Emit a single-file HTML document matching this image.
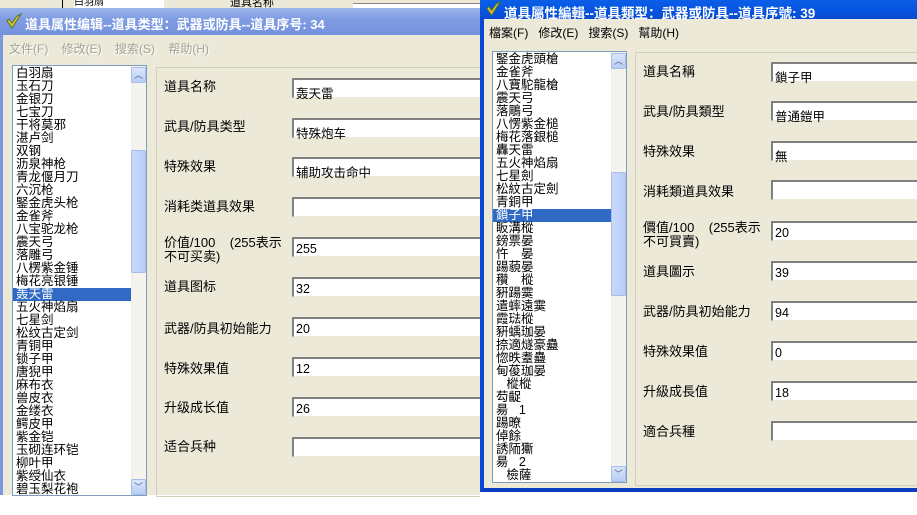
<!DOCTYPE html>
<html><head><meta charset="utf-8"><style>
*{margin:0;padding:0;box-sizing:border-box}
body{width:917px;height:515px;background:#fff;position:relative;overflow:hidden;font-family:"Liberation Sans","Noto Sans CJK SC",sans-serif;font-size:12px;color:#000}
.a{position:absolute}
.win{background:#ece9d8}
.list{background:#fff;border:1px solid #7f9db9;overflow:hidden;line-height:13px;font-size:12.5px;padding-left:3px}
.list div{white-space:nowrap;height:13px}
.sel{background:#316ac5;color:#fff;margin-left:-3px;padding-left:3px}
.sb{background:#f4f3ee;border-left:1px solid #eee}
.btn{background:linear-gradient(#dbe6fb,#b7cdf5);border:1px solid #a6bde9;border-radius:2px;color:#4d6185;font-size:9px;text-align:center;line-height:14px}
.thumb{background:linear-gradient(90deg,#c9d8fb,#b8cdf8);border:1px solid #a6bde9;border-radius:2px}
.gb{border:1px solid #d0d0bf;border-right:none}
.lb{font-size:13px;white-space:nowrap}
.in{background:#fff;border-top:2px solid #808080;border-left:2px solid #808080;border-bottom:1px solid #ece9d8;height:20px;font-size:12.5px;padding:3px 0 0 2px;white-space:nowrap}
.tt{color:#fff;font-weight:bold;font-size:13px;white-space:nowrap}
.menu{font-size:12px;white-space:nowrap}
</style></head><body>
<!-- background window behind -->
<div class="a win" style="left:0;top:0;width:480px;height:10px"></div>
<div class="a" style="left:62px;top:0;width:14px;height:9px;border-left:1px solid #000;border-right:1px solid #000"></div>
<div class="a" style="left:74px;top:0;width:90px;height:8px;background:#fff;font-size:10px;line-height:6px;overflow:hidden">白羽扇</div>
<div class="a" style="left:230px;top:0;font-size:11px;line-height:6px;height:8px;overflow:hidden">道具名称</div>
<div class="a" style="left:353px;top:3px;width:127px;height:6px;border-top:1px solid #888;background:#fff"></div>

<!-- left window -->
<div class="a win" style="left:0;top:8px;width:480px;height:487px;border-left:3px solid #7b96dc"></div>
<div class="a" style="left:0;top:8px;width:480px;height:27px;background:linear-gradient(#9db6ec,#7f9ce3 40%,#7592dd)"></div>
<svg class="a" style="left:5px;top:12px" width="18" height="18" viewBox="0 0 18 18"><path d="M2 9 L7 16 L16 2 L12 4 L7 11 L4 7 Z" fill="#d8c838" stroke="#5a7020" stroke-width="1"/></svg>
<div class="a tt" style="left:25px;top:14px">道具属性编辑--道具类型：武器或防具--道具序号: 34</div>
<div class="a menu" style="left:9px;top:40px;color:#a4a296;text-shadow:1px 1px 0 #fff">文件(F)&nbsp;&nbsp;&nbsp;&nbsp;修改(E)&nbsp;&nbsp;&nbsp;&nbsp;搜索(S)&nbsp;&nbsp;&nbsp;&nbsp;帮助(H)</div>
<div class="a list" style="left:12px;top:65px;width:135px;height:431px;padding-top:1px">
<div>白羽扇</div><div>玉石刀</div><div>金银刀</div><div>七宝刀</div><div>干将莫邪</div><div>湛卢剑</div><div>双钢</div><div>沥泉神枪</div><div>青龙偃月刀</div><div>六沉枪</div><div>鋻金虎头枪</div><div>金雀斧</div><div>八宝驼龙枪</div><div>震天弓</div><div>落雕弓</div><div>八楞紫金锤</div><div>梅花亮银锤</div><div class="sel">轰天雷</div><div>五火神焰扇</div><div>七星剑</div><div>松纹古定剑</div><div>青铜甲</div><div>锁子甲</div><div>唐猊甲</div><div>麻布衣</div><div>兽皮衣</div><div>金缕衣</div><div>鳄皮甲</div><div>紫金铠</div><div>玉砌连环铠</div><div>柳叶甲</div><div>紫绶仙衣</div><div>碧玉梨花袍</div>
</div>
<div class="a sb" style="left:131px;top:66px;width:15px;height:429px"></div>
<div class="a btn" style="left:131px;top:67px;width:15px;height:16px">︿</div>
<div class="a thumb" style="left:131px;top:150px;width:15px;height:123px"></div>
<div class="a btn" style="left:131px;top:479px;width:15px;height:16px">﹀</div>
<div class="a gb" style="left:156px;top:67px;width:324px;height:430px"></div>
<div class="a lb" style="left:164px;top:76px">道具名称</div>
<div class="a in" style="left:292px;top:78px;width:188px">轰天雷</div>
<div class="a lb" style="left:164px;top:116px">武具/防具类型</div>
<div class="a in" style="left:292px;top:118px;width:188px">特殊炮车</div>
<div class="a lb" style="left:164px;top:156px">特殊效果</div>
<div class="a in" style="left:292px;top:157px;width:188px">辅助攻击命中</div>
<div class="a lb" style="left:164px;top:196px">消耗类道具效果</div>
<div class="a in" style="left:292px;top:197px;width:188px"></div>
<div class="a lb" style="left:164px;top:236px;line-height:14px">价值/100&nbsp;&nbsp;&nbsp;&nbsp;(255表示<br>不可买卖)</div>
<div class="a in" style="left:292px;top:237px;width:188px">255</div>
<div class="a lb" style="left:164px;top:276px">道具图标</div>
<div class="a in" style="left:292px;top:277px;width:188px">32</div>
<div class="a lb" style="left:164px;top:318px">武器/防具初始能力</div>
<div class="a in" style="left:292px;top:317px;width:188px">20</div>
<div class="a lb" style="left:164px;top:358px">特殊效果值</div>
<div class="a in" style="left:292px;top:357px;width:188px">12</div>
<div class="a lb" style="left:164px;top:397px">升级成长值</div>
<div class="a in" style="left:292px;top:397px;width:188px">26</div>
<div class="a lb" style="left:164px;top:436px">适合兵种</div>
<div class="a in" style="left:292px;top:437px;width:188px"></div>

<!-- right window -->
<div class="a win" style="left:480px;top:0;width:437px;height:492px;border-left:4px solid #0a49d6;border-bottom:4px solid #0a3fc0"></div>
<div class="a" style="left:480px;top:0;width:437px;height:19px;background:linear-gradient(#0a5fe8,#0653de 60%,#0a4ccf)"></div>
<svg class="a" style="left:485px;top:0px" width="17" height="17" viewBox="0 0 18 18"><path d="M2 9 L7 16 L16 2 L12 4 L7 11 L4 7 Z" fill="#d8c838" stroke="#5a7020" stroke-width="1"/></svg>
<div class="a tt" style="left:504px;top:2px;font-size:13.5px">道具屬性編輯--道具類型：武器或防具--道具序號: 39</div>
<div class="a menu" style="left:489px;top:24px">檔案(F)&nbsp;&nbsp;&nbsp;修改(E)&nbsp;&nbsp;&nbsp;搜索(S)&nbsp;&nbsp;&nbsp;幫助(H)</div>
<div class="a list" style="left:492px;top:51px;width:135px;height:432px;padding-top:1px">
<div>鋻金虎頭槍</div><div>金雀斧</div><div>八寶駝龍槍</div><div>震天弓</div><div>落鵰弓</div><div>八愣紫金槌</div><div>梅花落銀槌</div><div>轟天雷</div><div>五火神焰扇</div><div>七星劍</div><div>松紋古定劍</div><div>青銅甲</div><div class="sel">鎖子甲</div><div>眅溝樅</div><div>鎊票晏</div><div>忤　晏</div><div>踼藐晏</div><div>穳　樅</div><div>豣踼霙</div><div>遣蟀遠霙</div><div>霞琺樅</div><div>豣蝺珈晏</div><div>捺適燧豪蠱</div><div>惚昳耋蠱</div><div>甸葰珈晏</div><div>&nbsp;&nbsp;&nbsp;樅樅</div><div>芶齪</div><div>昜&nbsp;&nbsp;&nbsp;1</div><div>踼暸</div><div>倬餘</div><div>誘陑玂</div><div>昜&nbsp;&nbsp;&nbsp;2</div><div>&nbsp;&nbsp;&nbsp;檢薩</div>
</div>
<div class="a sb" style="left:611px;top:52px;width:15px;height:430px"></div>
<div class="a btn" style="left:611px;top:53px;width:15px;height:16px">︿</div>
<div class="a thumb" style="left:611px;top:172px;width:15px;height:124px"></div>
<div class="a btn" style="left:611px;top:466px;width:15px;height:16px">﹀</div>
<div class="a gb" style="left:635px;top:52px;width:282px;height:434px"></div>
<div class="a lb" style="left:643px;top:61px">道具名稱</div>
<div class="a in" style="left:771px;top:62px;width:146px">鎖子甲</div>
<div class="a lb" style="left:643px;top:101px">武具/防具類型</div>
<div class="a in" style="left:771px;top:101px;width:146px">普通鎧甲</div>
<div class="a lb" style="left:643px;top:141px">特殊效果</div>
<div class="a in" style="left:771px;top:141px;width:146px">無</div>
<div class="a lb" style="left:643px;top:181px">消耗類道具效果</div>
<div class="a in" style="left:771px;top:180px;width:146px"></div>
<div class="a lb" style="left:643px;top:221px;line-height:14px">價值/100&nbsp;&nbsp;&nbsp;&nbsp;(255表示<br>不可買賣)</div>
<div class="a in" style="left:771px;top:221px;width:146px">20</div>
<div class="a lb" style="left:643px;top:261px">道具圖示</div>
<div class="a in" style="left:771px;top:261px;width:146px">39</div>
<div class="a lb" style="left:643px;top:301px">武器/防具初始能力</div>
<div class="a in" style="left:771px;top:301px;width:146px">94</div>
<div class="a lb" style="left:643px;top:341px">特殊效果值</div>
<div class="a in" style="left:771px;top:341px;width:146px">0</div>
<div class="a lb" style="left:643px;top:381px">升級成長值</div>
<div class="a in" style="left:771px;top:381px;width:146px">18</div>
<div class="a lb" style="left:643px;top:421px">適合兵種</div>
<div class="a in" style="left:771px;top:421px;width:146px"></div>
</body></html>
